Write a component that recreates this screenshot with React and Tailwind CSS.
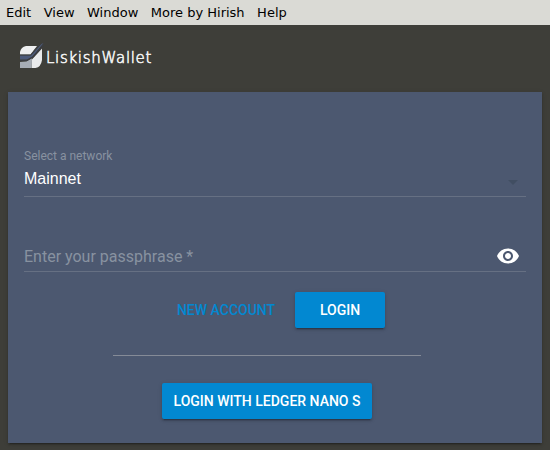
import React from "react";

const MENU = ["Edit", "View", "Window", "More by Hirish", "Help"];

const RAISED =
  "rounded-[2px] bg-[#0288d1] text-white shadow-[0_3px_1px_-2px_rgba(0,0,0,0.2),0_2px_2px_0_rgba(0,0,0,0.14),0_1px_5px_0_rgba(0,0,0,0.12)]";

function Logo() {
  return (
    <svg width="24" height="24" viewBox="0 0 24 24" className="shrink-0 overflow-visible">
      <path d="M6 1H17L10.500 9.500H0V7Q1 2 6 1Z" fill="#eeeff0" />
      <path d="M11.500 23V15L22 3.500V15Q21 22 15.500 23Z" fill="#e9eaeb" />
      <path d="M0 17L6.500 16.500L12 13L11.500 23H0Z" fill="#a7adb5" />
      <path d="M0 10.500H11L21.500 -1L23.500 -2L12.500 11.500L7 14.500H0Z" fill="#4c5a7a" />
      <path d="M0 10H10.500L19 0" fill="none" stroke="#3e414a" strokeWidth="0.8" />
      <path d="M0 15.500H7L13 12L23.500 0" fill="none" stroke="#3b3d42" strokeWidth="1.2" />
    </svg>
  );
}

function EyeIcon() {
  return (
    <svg width="24" height="24" viewBox="0 0 24 24" fill="#fff" className="mt-px">
      <path d="M12 4.500C7 4.500 2.730 7.610 1 12c1.730 4.390 6 7.500 11 7.500s9.270-3.110 11-7.500c-1.730-4.390-6-7.500-11-7.500zM12 17c-2.760 0-5-2.240-5-5s2.240-5 5-5 5 2.240 5 5-2.240 5-5 5zm0-8c-1.660 0-3 1.340-3 3s1.340 3 3 3 3-1.340 3-3-1.340-3-3-3z" />
    </svg>
  );
}

export default function App() {
  return (
    <div className="flex h-[450px] w-[550px] flex-col overflow-hidden bg-[#3e3e39] font-['Roboto',sans-serif]">
      <nav className="flex h-[25px] shrink-0 items-center gap-[12.5px] bg-[#dadad5] px-1.5 font-['DejaVu_Sans',sans-serif] text-[13px] leading-[25px] text-black">
        {MENU.map((item) => (
          <span key={item} className="whitespace-nowrap">{item}</span>
        ))}
      </nav>

      <header className="flex h-[67px] shrink-0 items-center gap-0.5 pl-5 pb-[3px]">
        <Logo />
        <span className="mt-px whitespace-nowrap font-['DejaVu_Sans',sans-serif] text-[15px] font-extralight leading-5 tracking-[0.7px] text-[#f2f2f2] [-webkit-text-stroke:0.6px_#f2f2f2]">
          LiskishWallet
        </span>
      </header>

      <main className="mx-2 flex h-[351px] shrink-0 flex-col bg-[#4c5870] px-4 shadow-[0_3px_1px_-2px_rgba(0,0,0,0.2),0_2px_2px_0_rgba(0,0,0,0.14),0_1px_5px_0_rgba(0,0,0,0.12)]">
        <div className="mt-14 flex h-[49px] flex-col border-b border-[#667083]">
          <label className="h-4 text-[12px] leading-4 text-[#8892a0]">Select a network</label>
          <div className="mt-[5px] flex h-5 items-center justify-between pr-2">
            <span className="font-['Liberation_Sans',sans-serif] text-[16px] leading-5 text-white">
              Mainnet
            </span>
            <svg width="10" height="5" viewBox="0 0 10 5" className="mt-1.5">
              <path d="M0 0H10L5 5Z" fill="#414e62" />
            </svg>
          </div>
        </div>

        <div className="mt-[46px] flex h-[29px] items-start justify-between border-b border-[#667083] pr-1.5">
          <span className="mt-1 text-[16px] leading-5 text-[#8892a0]">Enter your passphrase *</span>
          <EyeIcon />
        </div>

        <div className="mt-5 flex h-9 items-center pl-[147px] text-[14px] font-medium leading-9">
          <button className="w-[110px] text-[#0288d1]">NEW ACCOUNT</button>
          <button className={"ml-[14px] h-9 w-[90px] " + RAISED}>LOGIN</button>
        </div>

        <hr className="ml-[89px] mt-[27px] w-[308px] border-t border-[#858b97]" />

        <button className={"ml-[138px] mt-[27px] h-9 w-[210px] text-[14px] font-medium leading-9 " + RAISED}>
          LOGIN WITH LEDGER NANO S
        </button>
      </main>
    </div>
  );
}
